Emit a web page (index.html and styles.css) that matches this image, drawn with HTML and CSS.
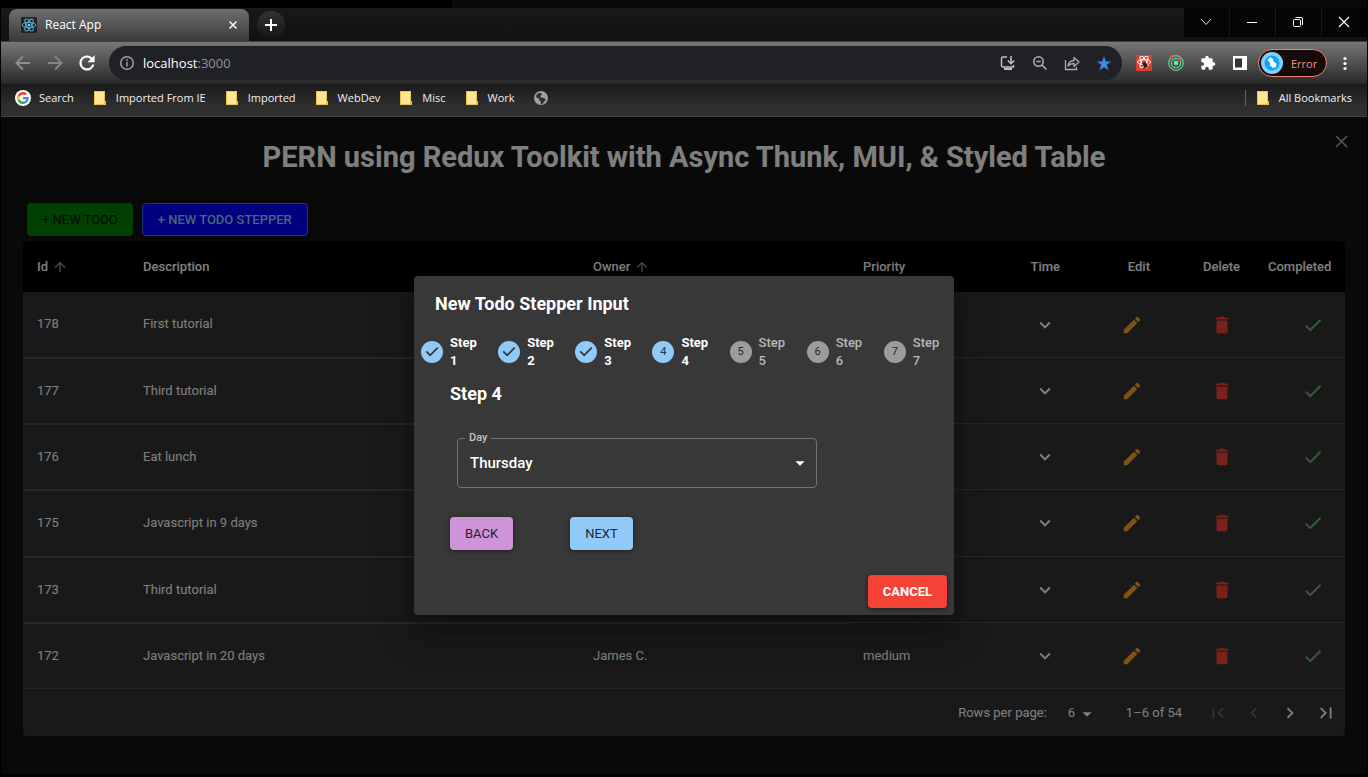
FILE: index.html
```html
<!DOCTYPE html>
<html lang="en">
<head>
<meta charset="utf-8">
<title>React App</title>
<link rel="stylesheet" href="styles.css">
</head>
<body>
<svg class="sprite" aria-hidden="true">
  <symbol id="i-up" viewBox="0 0 24 24"><path d="M4 12l1.41 1.41L11 7.83V20h2V7.83l5.58 5.59L20 12l-8-8-8 8z"/></symbol>
  <symbol id="i-down" viewBox="0 0 24 24"><path d="M7.41 8.59 12 13.17l4.59-4.58L18 10l-6 6-6-6 1.41-1.41z"/></symbol>
  <symbol id="i-edit" viewBox="0 0 24 24"><path d="M3 17.25V21h3.75L17.81 9.94l-3.75-3.75L3 17.25zM20.71 7.04c.39-.39.39-1.02 0-1.41l-2.34-2.34a1 1 0 0 0-1.41 0l-1.83 1.83 3.75 3.75 1.83-1.83z"/></symbol>
  <symbol id="i-delete" viewBox="0 0 24 24"><path d="M6 19c0 1.1.9 2 2 2h8c1.1 0 2-.9 2-2V7H6v12zM19 4h-3.5l-1-1h-5l-1 1H5v2h14V4z"/></symbol>
  <symbol id="i-check" viewBox="0 0 24 24"><path d="M9 16.17 4.83 12l-1.42 1.41L9 19 21 7l-1.41-1.41z"/></symbol>
  <symbol id="i-done" viewBox="0 0 24 24"><path d="M12 0a12 12 0 1 0 0 24 12 12 0 0 0 0-24zm-2 17l-5-5 1.4-1.4 3.6 3.6 7.6-7.6L19 8l-9 9z"/></symbol>
  <symbol id="i-caret" viewBox="0 0 24 24"><path d="M7 10l5 5 5-5z"/></symbol>
  <symbol id="i-folder" viewBox="0 0 16 16"><path d="M2 1h11v10h1v4H2z" fill="#e9c24a"/><path d="M3 2h9v12H3z" fill="#ffe695"/></symbol>
</svg>
<div class="window">
  <div class="frame-top"></div>
  <header class="tabstrip">
    <div class="tab">
      <svg class="favicon" viewBox="0 0 16 16"><rect width="16" height="16" rx="1" fill="#20232a"/><g fill="none" stroke="#58b8d4" stroke-width=".9"><ellipse cx="8" cy="8" rx="6.8" ry="2.6"/><ellipse cx="8" cy="8" rx="6.8" ry="2.6" transform="rotate(60 8 8)"/><ellipse cx="8" cy="8" rx="6.8" ry="2.6" transform="rotate(120 8 8)"/></g><circle cx="8" cy="8" r="1.3" fill="#61dafb"/></svg>
      <span class="tab-title">React App</span>
      <button class="tab-close" aria-label="Close tab"><svg width="16" height="16" viewBox="0 0 16 16"><path d="M4.5 4.5l7 7m0-7l-7 7" stroke="#f2f2f2" stroke-width="1.6"/></svg></button>
    </div>
    <button class="new-tab" aria-label="New tab"><svg width="16" height="16" viewBox="0 0 16 16"><path d="M8 2v12M2 8h12" stroke="#fff" stroke-width="2"/></svg></button>
    <div class="controls">
      <button aria-label="Search tabs"><svg width="16" height="16" viewBox="0 0 16 16"><path d="M3 5l5 5.500 5-5.500" fill="none" stroke="#ddd"/></svg></button>
      <button aria-label="Minimize"><svg width="16" height="16" viewBox="0 0 16 16"><path d="M3 8.500h10" stroke="#fff"/></svg></button>
      <button aria-label="Restore"><svg width="16" height="16" viewBox="0 0 16 16" fill="none" stroke="#fff"><rect x="3.500" y="5.500" width="7" height="7" rx="1"/><path d="M5.500 3.500h5.500a1.500 1.500 0 0 1 1.500 1.500v6"/></svg></button>
      <button aria-label="Close"><svg width="16" height="16" viewBox="0 0 16 16"><path d="M3 3l10 10M13 3L3 13" stroke="#fff" stroke-width="1.2"/></svg></button>
    </div>
  </header>
  <nav class="toolbar">
    <button class="tool" aria-label="Back"><svg width="18" height="18" viewBox="0 0 18 18" fill="none" stroke="#8f8f8f" stroke-width="2"><path d="M16 9H3M9 2.500L2.500 9 9 15.500"/></svg></button>
    <button class="tool" aria-label="Forward"><svg width="18" height="18" viewBox="0 0 18 18" fill="none" stroke="#858585" stroke-width="2"><path d="M2 9h13M9 2.500L15.500 9 9 15.500"/></svg></button>
    <button class="tool" aria-label="Reload"><svg width="22" height="22" viewBox="0 0 24 24" fill="#fff"><path d="M17.650 6.350A7.960 7.960 0 0 0 12 4a8 8 0 1 0 7.730 10h-2.080A6 6 0 1 1 12 6c1.660 0 3.140.69 4.220 1.780L13 11h7V4l-2.350 2.350z" stroke="#fff" stroke-width=".5"/></svg></button>
    <div class="omnibox">
      <svg class="info" width="16" height="16" viewBox="0 0 16 16" fill="none" stroke="#9aa0a6" stroke-width="1.5"><circle cx="8" cy="8" r="6.300"/><path d="M8 7v4.500M8 4.300v1.600"/></svg>
      <div class="url" role="textbox" aria-label="Address">localhost<span>:3000</span></div>
      <button class="tool" aria-label="Install"><svg width="16" height="16" viewBox="0 0 16 16" fill="none" stroke="#bdc1c6" stroke-width="1.5"><path d="M7 2H3a1.500 1.500 0 0 0-1.500 1.500v7A1.500 1.500 0 0 0 3 12h10.500v-2M11 1v7M7.800 5.500L11 8.700l3.200-3.200"/><path d="M4 14h8" stroke-width="2"/></svg></button>
      <button class="tool" aria-label="Zoom"><svg width="16" height="16" viewBox="0 0 16 16" fill="none" stroke="#a9adb2" stroke-width="1.6"><circle cx="6.500" cy="6.500" r="4.700"/><path d="M10 10l4.500 4.500M4.300 6.500h4.400"/></svg></button>
      <button class="tool" aria-label="Share"><svg width="16" height="16" viewBox="0 0 16 16" fill="none" stroke="#a9adb2" stroke-width="1.300"><path d="M1.500 5v9.500h11V12"/><path d="M4 11c.4-3.500 2.600-5.300 6-5.500V2.500l5 4.500-5 4.500V8.500C7.500 8.400 5.600 9.200 4 11z" stroke-linejoin="round"/></svg></button>
      <button class="tool" aria-label="Bookmark"><svg width="16" height="16" viewBox="0 0 24 24" fill="#4285f4"><path d="M12 18.300L18.700 23l-2.500-8.500L23 9.600h-8.300L12 1.500 9.300 9.600H1l6.800 4.900L5.300 23z"/></svg></button>
    </div>
    <div class="extensions">
      <button class="tool" aria-label="Redux tools"><svg width="16" height="16" viewBox="0 0 16 16"><rect width="16" height="16" fill="#d9402f"/><g fill="none" stroke="#fff"><ellipse cx="8" cy="7" rx="6.500" ry="2.500"/><ellipse cx="8" cy="7" rx="6.500" ry="2.500" transform="rotate(60 8 7)"/><ellipse cx="8" cy="7" rx="6.500" ry="2.500" transform="rotate(120 8 7)"/></g><ellipse cx="9" cy="10" rx="2" ry="3" transform="rotate(-35 9 10)" fill="#421b18"/><path d="M6 8l7 5M12.500 8l-6 6M9 7.500v6.500" stroke="#421b18" stroke-width=".8"/></svg></button>
      <button class="tool" aria-label="Orbit"><svg width="16" height="16" viewBox="0 0 16 16" fill="none" stroke="#5fd09a" stroke-width="1.200"><circle cx="8" cy="8" r="7.300"/><circle cx="8" cy="8" r="4.700"/><circle cx="8" cy="8" r="1.800" fill="#6fffb5"/><circle cx="3.600" cy="1.700" r="1" fill="#e5532d" stroke="#e5532d"/><circle cx="11.500" cy="4.500" r="1" fill="#e5532d" stroke="#e5532d"/></svg></button>
      <button class="tool" aria-label="Extensions"><svg width="16" height="16" viewBox="0 0 24 24" fill="#fff"><path d="M20.500 11H19V7c0-1.100-.9-2-2-2h-4V3.500a2.500 2.500 0 0 0-5 0V5H4c-1.100 0-2 .9-2 2v3.800h1.500a2.700 2.700 0 0 1 0 5.400H2V20c0 1.100.9 2 2 2h3.800v-1.500a2.700 2.700 0 0 1 5.400 0V22H17c1.100 0 2-.9 2-2v-4h1.500a2.500 2.500 0 0 0 0-5z"/></svg></button>
      <button class="tool" aria-label="Side panel"><svg width="14" height="14" viewBox="0 0 14 14"><path d="M0 0h14v14H0z" fill="#fff"/><path d="M2 2.500h7v9H2z" fill="#333"/></svg></button>
    </div>
    <button class="profile"><svg width="22" height="22" viewBox="0 0 22 22"><circle cx="11" cy="11" r="11" fill="#7fd0fb"/><circle cx="11" cy="11" r="7.500" fill="#12a5f5"/><path d="M6.500 8l3-3 3 2.500-.5 1.500 3.500 2.500-.5 3.500-3 1-3-2.500v-3z" fill="#eef8ff"/></svg>Error</button>
    <button class="tool" aria-label="Menu"><svg width="16" height="16" viewBox="0 0 16 16" fill="#fff"><circle cx="8" cy="3.500" r="1.600"/><circle cx="8" cy="8.500" r="1.600"/><circle cx="8" cy="13.500" r="1.600"/></svg></button>
  </nav>
  <nav class="bookmarks">
    <a href="#"><svg viewBox="0 0 48 48"><circle cx="24" cy="24" r="24" fill="#fff"/><g transform="translate(6 6) scale(.75)"><path fill="#EA4335" d="M24 9.500c3.540 0 6.710 1.220 9.210 3.600l6.850-6.850C35.900 2.380 30.470 0 24 0 14.620 0 6.510 5.380 2.560 13.220l7.980 6.190C12.430 13.720 17.740 9.500 24 9.500z"/><path fill="#4285F4" d="M46.980 24.550c0-1.570-.15-3.090-.38-4.550H24v9.020h12.940c-.58 2.960-2.260 5.480-4.780 7.180l7.730 6c4.510-4.180 7.090-10.360 7.090-17.650z"/><path fill="#FBBC05" d="M10.530 28.590c-.48-1.450-.76-2.990-.76-4.590s.27-3.140.76-4.590l-7.980-6.190C.92 16.460 0 20.120 0 24c0 3.880.92 7.540 2.560 10.780l7.970-6.190z"/><path fill="#34A853" d="M24 48c6.480 0 11.930-2.130 15.890-5.810l-7.730-6c-2.150 1.450-4.920 2.300-8.160 2.300-6.260 0-11.570-4.220-13.470-9.910l-7.980 6.190C6.510 42.620 14.620 48 24 48z"/></g></svg>Search</a>
    <a href="#"><svg><use href="#i-folder"/></svg>Imported From IE</a>
    <a href="#"><svg><use href="#i-folder"/></svg>Imported</a>
    <a href="#"><svg><use href="#i-folder"/></svg>WebDev</a>
    <a href="#"><svg><use href="#i-folder"/></svg>Misc</a>
    <a href="#"><svg><use href="#i-folder"/></svg>Work</a>
    <a href="#" aria-label="Site"><svg viewBox="0 0 16 16"><circle cx="8" cy="8" r="7" fill="#9aa0a6"/><path d="M3 6c1-2.500 3-3.500 5-3l1 1.500-2 1.500 1 1.500 3 .5 2 2-2 1.500-1 2-2.500 1 .5-3-2-1.500.5-1.500L4 8z" fill="#2c2c2c"/></svg></a>
    <a href="#" class="all"><svg><use href="#i-folder"/></svg>All Bookmarks</a>
  </nav>
  <main class="page">
    <svg class="dismiss" width="13" height="13" viewBox="0 0 13 13"><path d="M1 1l11 11M12 1L1 12" stroke="#a8a8a8" stroke-width="1.600"/></svg>
    <h1>PERN using Redux Toolkit with Async Thunk, MUI, &amp; Styled Table</h1>
    <div class="actions">
      <button class="btn green">+ NEW TODO</button>
      <button class="btn blue">+ NEW TODO STEPPER</button>
    </div>
    <section class="paper">
      <table>
        <colgroup><col class="c-id"><col class="c-desc"><col class="c-owner"><col><col class="c-act"><col class="c-act"><col class="c-act"><col class="c-last"></colgroup>
        <thead><tr><th><span class="sort">Id <svg><use href="#i-up"/></svg></span></th><th>Description</th><th><span class="sort">Owner <svg><use href="#i-up"/></svg></span></th><th>Priority</th><th class="r">Time</th><th class="r">Edit</th><th class="r">Delete</th><th class="r">Completed</th></tr></thead>
        <tbody>
          <tr><td>178</td><td>First tutorial</td><td></td><td></td><td class="r"><button class="icon small" aria-label="Time"><svg><use href="#i-down"/></svg></button></td><td class="r"><button class="icon edit" aria-label="Edit"><svg><use href="#i-edit"/></svg></button></td><td class="r"><button class="icon delete" aria-label="Delete"><svg><use href="#i-delete"/></svg></button></td><td class="r"><button class="icon check" aria-label="Completed"><svg><use href="#i-check"/></svg></button></td></tr>
          <tr><td>177</td><td>Third tutorial</td><td></td><td></td><td class="r"><button class="icon small" aria-label="Time"><svg><use href="#i-down"/></svg></button></td><td class="r"><button class="icon edit" aria-label="Edit"><svg><use href="#i-edit"/></svg></button></td><td class="r"><button class="icon delete" aria-label="Delete"><svg><use href="#i-delete"/></svg></button></td><td class="r"><button class="icon check" aria-label="Completed"><svg><use href="#i-check"/></svg></button></td></tr>
          <tr><td>176</td><td>Eat lunch</td><td></td><td></td><td class="r"><button class="icon small" aria-label="Time"><svg><use href="#i-down"/></svg></button></td><td class="r"><button class="icon edit" aria-label="Edit"><svg><use href="#i-edit"/></svg></button></td><td class="r"><button class="icon delete" aria-label="Delete"><svg><use href="#i-delete"/></svg></button></td><td class="r"><button class="icon check" aria-label="Completed"><svg><use href="#i-check"/></svg></button></td></tr>
          <tr><td>175</td><td>Javascript in 9 days</td><td></td><td></td><td class="r"><button class="icon small" aria-label="Time"><svg><use href="#i-down"/></svg></button></td><td class="r"><button class="icon edit" aria-label="Edit"><svg><use href="#i-edit"/></svg></button></td><td class="r"><button class="icon delete" aria-label="Delete"><svg><use href="#i-delete"/></svg></button></td><td class="r"><button class="icon check" aria-label="Completed"><svg><use href="#i-check"/></svg></button></td></tr>
          <tr><td>173</td><td>Third tutorial</td><td></td><td></td><td class="r"><button class="icon small" aria-label="Time"><svg><use href="#i-down"/></svg></button></td><td class="r"><button class="icon edit" aria-label="Edit"><svg><use href="#i-edit"/></svg></button></td><td class="r"><button class="icon delete" aria-label="Delete"><svg><use href="#i-delete"/></svg></button></td><td class="r"><button class="icon check" aria-label="Completed"><svg><use href="#i-check"/></svg></button></td></tr>
          <tr><td>172</td><td>Javascript in 20 days</td><td>James C.</td><td>medium</td><td class="r"><button class="icon small" aria-label="Time"><svg><use href="#i-down"/></svg></button></td><td class="r"><button class="icon edit" aria-label="Edit"><svg><use href="#i-edit"/></svg></button></td><td class="r"><button class="icon delete" aria-label="Delete"><svg><use href="#i-delete"/></svg></button></td><td class="r"><button class="icon check" aria-label="Completed"><svg><use href="#i-check"/></svg></button></td></tr>
        </tbody>
      </table>
      <div class="pager">
        <label for="rows">Rows per page:</label>
        <div class="rows"><select id="rows"><option>6</option></select><svg><use href="#i-caret"/></svg></div>
        <span class="range">1–6 of 54</span>
        <button class="icon off" aria-label="First page"><svg viewBox="0 0 24 24"><path d="M18.410 16.590L13.820 12l4.590-4.590L17 6l-6 6 6 6zM6 6h2v12H6z"/></svg></button>
        <button class="icon off" aria-label="Previous page"><svg viewBox="0 0 24 24"><path d="M15.410 16.590L10.830 12l4.580-4.590L14 6l-6 6 6 6z"/></svg></button>
        <button class="icon" aria-label="Next page"><svg viewBox="0 0 24 24"><path d="M8.590 16.590L13.170 12 8.590 7.410 10 6l6 6-6 6z"/></svg></button>
        <button class="icon" aria-label="Last page"><svg viewBox="0 0 24 24"><path d="M5.590 7.410L10.180 12l-4.590 4.590L7 18l6-6-6-6zM16 6h2v12h-2z"/></svg></button>
      </div>
    </section>
    <div class="backdrop">
      <div class="dialog" role="dialog" aria-labelledby="dlg-title">
        <h2 id="dlg-title">New Todo Stepper Input</h2>
        <ol class="stepper">
          <li class="on"><svg><use href="#i-done"/></svg><span>Step 1</span></li>
          <li class="on"><svg><use href="#i-done"/></svg><span>Step 2</span></li>
          <li class="on"><svg><use href="#i-done"/></svg><span>Step 3</span></li>
          <li class="on"><b>4</b><span>Step 4</span></li>
          <li><b>5</b><span>Step 5</span></li>
          <li><b>6</b><span>Step 6</span></li>
          <li><b>7</b><span>Step 7</span></li>
        </ol>
        <div class="body">
          <h3>Step 4</h3>
          <div class="field">
            <label for="day">Day</label>
            <select id="day"><option>Thursday</option></select>
            <svg><use href="#i-caret"/></svg>
          </div>
          <div class="nav">
            <button class="btn purple">BACK</button>
            <button class="btn sky">NEXT</button>
          </div>
        </div>
        <div class="foot"><button class="btn red">CANCEL</button></div>
      </div>
    </div>
  </main>
</div>
</body>
</html>
```
FILE: styles.css
```css
* { box-sizing: border-box; }
body { margin: 0; background: #000; font-family: Roboto, sans-serif; font-size: 13px; color: #fff; }
button { font: inherit; color: inherit; border: 0; padding: 0; background: none; display: inline-flex; align-items: center; justify-content: center; }
svg { display: block; flex: none; }
.sprite { position: absolute; width: 0; height: 0; }
.window { min-height: 100vh; display: flex; flex-direction: column; padding: 0 1px 3px; font-weight: 400; }

.frame-top { height: 8px; background: linear-gradient(90deg, #000 33%, #090909 33%); }
.tabstrip { display: flex; height: 33px; padding-left: 8px; background: linear-gradient(#191919, #111); font-family: "Open Sans", sans-serif; font-size: 12px; }
.tab { width: 240px; margin-top: 1px; padding: 0 8px 1px 12px; display: flex; align-items: center; gap: 8px; border-radius: 8px 8px 0 0; background: linear-gradient(#6f6f6f, #3a3a3a); }
.favicon { width: 16px; height: 16px; }
.tab-title { flex: 1; }
.new-tab { width: 28px; height: 28px; margin: 3px 0 0 8px; border-radius: 50%; background: linear-gradient(#333, #141414); }
.controls { margin-left: auto; display: flex; height: 29px; gap: 1px; background: #181818; }
.controls button { width: 45px; padding: 0 2px 2px 0; background: #040404; }

.toolbar { display: flex; align-items: center; height: 43px; padding: 0 6px; border-top: 1px solid #414141; background: linear-gradient(#777, #282828); }
.tool { width: 32px; height: 28px; }
.omnibox { flex: 1; display: flex; align-items: center; height: 34px; margin: 0 6px; padding: 0 2px 0 10px; border-radius: 17px; background: #202124; }
.url { flex: 1; margin-left: 8px; font-family: "Open Sans", sans-serif; font-size: 13px; color: #fff; }
.url span { color: #8f9398; }
.extensions { display: flex; }
.profile { width: 69px; height: 28px; margin: 0 2px; padding-left: 2px; gap: 8px; justify-content: flex-start; border: 1px solid #f08078; border-radius: 14px; background: #160b0b; color: #f58b82; font-family: "Open Sans", sans-serif; font-size: 11px; }

.bookmarks { display: flex; align-items: center; gap: 18px; height: 33px; padding: 0 15px 5px 14px; border-bottom: 1px solid #444; background: linear-gradient(#1a1a1a, #2f2f2f 70%); font-family: "Open Sans", sans-serif; font-size: 11px; }
.bookmarks a { display: flex; align-items: center; gap: 8px; color: #f0f0f0; text-decoration: none; }
.bookmarks svg { width: 16px; height: 16px; }
.bookmarks .all { margin-left: auto; padding-left: 9px; border-left: 1px solid #666; }

.page { position: relative; flex: 1; padding: 22px 22px 38px; background: #121212; }
.dismiss { position: absolute; top: 18px; right: 19px; }
h1 { margin: 0; font-size: 29px; line-height: 36px; font-weight: 700; text-align: center; }
.actions { display: flex; gap: 9px; padding: 28px 4px 5px; }
.btn { height: 33px; padding: 0 15px; border-radius: 4px; font-weight: 500; white-space: nowrap; box-shadow: 0 1px 4px rgba(0, 0, 0, .5); }
.green { background: #008000; color: rgba(0, 0, 0, .87); }
.blue { background: #00f; color: #90caf9; border: 1px solid #4865fc; }
.purple { background: #ce93d8; color: #291d2b; }
.sky { background: #90caf9; color: #1d2832; }
.green, .purple, .sky { font-weight: 400; }
.red { background: #f44336; color: #fff; font-weight: 700; }

.paper { border-radius: 4px; overflow: hidden; background: #333; }
table { width: 100%; table-layout: fixed; border-collapse: separate; border-spacing: 0; }
.c-id { width: 106px; }
.c-desc { width: 450px; }
.c-owner { width: 270px; }
.c-act { width: 90px; }
.c-last { width: 91px; }
th { height: 51px; padding: 0 14px; background: #000; font-weight: 500; text-align: left; }
td { height: 66px; padding: 0 14px; border-bottom: 1px solid #515151; }
td:nth-child(-n+3) { padding-bottom: 2px; }
tr:nth-child(4) td { height: 67px; }
tr + tr td:nth-child(-n+3) { border-top: 1px solid #515151; }
.r { text-align: right; }
.sort { display: inline-flex; align-items: center; gap: 4px; }
.sort svg { width: 16px; height: 16px; fill: #999; }
.icon { width: 36px; height: 36px; vertical-align: middle; }
.small { width: 31px; }
.icon svg { width: 22px; height: 22px; fill: #fff; }
.icon.edit svg { fill: #ffa726; }
.icon.delete svg { fill: #f44336; }
.icon.check svg { fill: #66bb6a; }
.icon.off svg { fill: #666; }
.pager { display: flex; align-items: center; justify-content: flex-end; height: 47px; padding-right: 1px; }
.rows { position: relative; margin: 0 28px 0 14px; }
.rows svg { position: absolute; right: 0; top: 4px; width: 22px; height: 22px; fill: #fff; pointer-events: none; }
select { appearance: none; border: 0; background: none; color: inherit; font: inherit; }
.rows select { width: 37px; height: 28px; padding: 0 7px; }
.range { margin-right: 18px; }

.backdrop { position: absolute; inset: 0; display: flex; align-items: center; justify-content: center; background: rgba(0, 0, 0, .5); }
.dialog { width: 540px; border-radius: 4px; background: #383838; box-shadow: 0 10px 14px -6px rgba(0, 0, 0, .2), 0 22px 34px 3px rgba(0, 0, 0, .14), 0 8px 41px 7px rgba(0, 0, 0, .12); }
h2, h3 { margin: 0; font-size: 18px; line-height: 28px; font-weight: 700; }
h2 { padding: 14px 21px 16px; }
.stepper { display: flex; margin: 0; padding: 0; list-style: none; }
.stepper li { flex: 1; padding: 0 7px; display: flex; align-items: center; gap: 7px; line-height: 18px; font-weight: 500; color: #b8b8b8; }
.stepper span { width: 30px; }
.stepper svg { width: 22px; height: 22px; fill: #90caf9; }
.stepper b { flex: none; width: 22px; height: 22px; border-radius: 50%; font-size: 11px; line-height: 22px; font-weight: 400; text-align: center; background: #9c9c9c; color: #262626; }
.stepper .on { color: #fff; font-weight: 700; }
.stepper .on b { background: #90caf9; color: #24303a; }
.body { padding: 10px 36px 25px; }
.field { position: relative; width: 360px; margin: 30px 7px 29px; }
.field label { position: absolute; left: 8px; top: -7px; padding: 0 4px; font-size: 11px; line-height: 14px; font-weight: 500; background: #383838; color: #c3c3c3; }
.field select { display: block; width: 100%; height: 50px; padding: 0 12px; border: 1px solid #737373; border-radius: 4px; font-size: 15px; font-weight: 500; }
.field svg { position: absolute; right: 6px; top: 14px; width: 22px; height: 22px; fill: #fff; pointer-events: none; }
.nav { display: flex; gap: 57px; }
.foot { display: flex; justify-content: flex-end; padding: 0 7px 7px; }
```
